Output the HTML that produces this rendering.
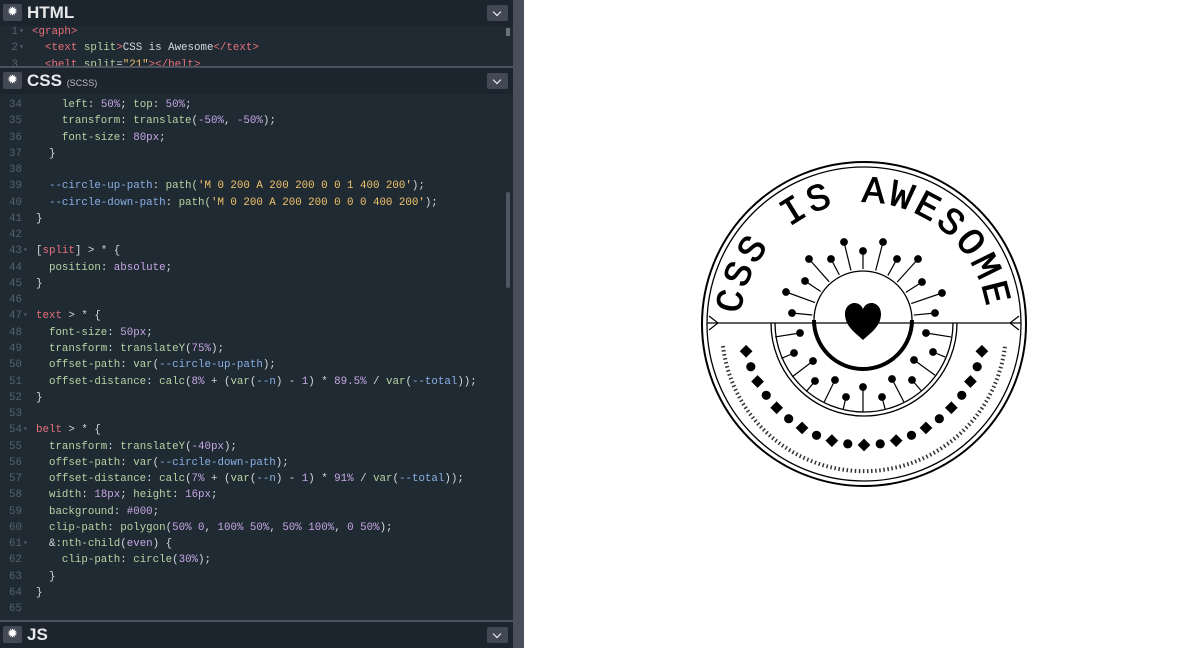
<!DOCTYPE html>
<html><head><meta charset="utf-8"><style>
*{margin:0;padding:0;box-sizing:border-box}
body{width:1200px;height:648px;overflow:hidden;background:#fff;position:relative;font-family:"Liberation Sans",sans-serif}
#ed{position:absolute;left:0;top:0;width:513px;height:648px;background:#1f2a33}
#div{position:absolute;left:513px;top:0;width:11px;height:648px;background:#4a4e5c}
.hd{position:absolute;left:0;width:513px;height:26px;background:#1c252e;color:#e6e8ea;font-weight:bold;font-size:17px}
.hd .g{position:absolute;left:3px;top:4px;width:19px;height:17px;background:#434955;border-radius:2px;color:#fff;font-size:11px;text-align:center;line-height:17px}
.hd .t{position:absolute;left:27px;top:3px}
.hd .t small{font-size:9px;font-weight:normal;color:#bbb}
.hd .b{position:absolute;left:487px;top:5px;width:21px;height:16px;background:#434855;border-radius:2px}
.hd .b:after{content:"";position:absolute;left:7px;top:4px;width:5px;height:5px;border-right:1.6px solid #fff;border-bottom:1.6px solid #fff;transform:rotate(45deg)}
.code{position:absolute;left:0;font-family:"Liberation Mono",monospace;font-size:10.8px;line-height:16.26px;color:#d3d9de;white-space:pre}
.ln{display:inline-block;width:22px;text-align:right;color:#56626c;margin-right:14px;position:relative}
.ln i{position:absolute;left:23px;top:0;font-style:normal;font-size:8px}
.p{color:#b8d4a4}.v{color:#c7a6e3}.s{color:#f3c46a}.r{color:#e8707a}.n{color:#c7a6e3}.u{color:#8ab0e6}
.sep{position:absolute;left:0;width:513px;height:2px;background:#4b545e}
</style></head><body>
<div id="ed">
<div class="hd" style="top:0"><div class="g">✹</div><div class="t">HTML</div><div class="b"></div></div>
<div style="position:absolute;left:0;top:26px;width:513px;height:40px;overflow:hidden;background:#1f2a33">
<div class="code" style="top:-2px;left:-4px"><span class="ln">1<i>▾</i></span><span class="r">&lt;graph&gt;</span>
<span class="ln">2<i>▾</i></span><span class="r">  &lt;text </span><span class="p">split</span><span class="r">&gt;</span>CSS is Awesome<span class="r">&lt;/text&gt;</span>
<span class="ln">3</span><span class="r">  &lt;belt </span><span class="p">split</span>=<span class="s">"21"</span><span class="r">&gt;&lt;/belt&gt;</span></div>
<div style="position:absolute;left:506px;top:2px;width:4px;height:8px;background:#6b737c"></div>
</div>
<div class="sep" style="top:66px"></div>
<div class="hd" style="top:68px"><div class="g">✹</div><div class="t">CSS <small>(SCSS)</small></div><div class="b"></div></div>
<div style="position:absolute;left:506px;top:192px;width:4px;height:96px;background:#4f5862;border-radius:2px"></div>
<div class="code" style="top:97px"><span class="ln">34</span>    <span class="p">left</span>: <span class="n">50%</span>; <span class="p">top</span>: <span class="n">50%</span>;
<span class="ln">35</span>    <span class="p">transform</span>: <span class="p">translate</span>(<span class="n">-50%</span>, <span class="n">-50%</span>);
<span class="ln">36</span>    <span class="p">font-size</span>: <span class="n">80px</span>;
<span class="ln">37</span>  }
<span class="ln">38</span>
<span class="ln">39</span>  <span class="u">--circle-up-path</span>: <span class="p">path(</span><span class="s">'M 0 200 A 200 200 0 0 1 400 200'</span>);
<span class="ln">40</span>  <span class="u">--circle-down-path</span>: <span class="p">path(</span><span class="s">'M 0 200 A 200 200 0 0 0 400 200'</span>);
<span class="ln">41</span>}
<span class="ln">42</span>
<span class="ln">43<i>▾</i></span>[<span class="r">split</span>] &gt; * {
<span class="ln">44</span>  <span class="p">position</span>: <span class="n">absolute</span>;
<span class="ln">45</span>}
<span class="ln">46</span>
<span class="ln">47<i>▾</i></span><span class="r">text</span> &gt; * {
<span class="ln">48</span>  <span class="p">font-size</span>: <span class="n">50px</span>;
<span class="ln">49</span>  <span class="p">transform</span>: <span class="p">translateY</span>(<span class="n">75%</span>);
<span class="ln">50</span>  <span class="p">offset-path</span>: <span class="p">var</span>(<span class="u">--circle-up-path</span>);
<span class="ln">51</span>  <span class="p">offset-distance</span>: <span class="p">calc</span>(<span class="n">8%</span> + (<span class="p">var</span>(<span class="u">--n</span>) - <span class="n">1</span>) * <span class="n">89.5%</span> / <span class="p">var</span>(<span class="u">--total</span>));
<span class="ln">52</span>}
<span class="ln">53</span>
<span class="ln">54<i>▾</i></span><span class="r">belt</span> &gt; * {
<span class="ln">55</span>  <span class="p">transform</span>: <span class="p">translateY</span>(<span class="n">-40px</span>);
<span class="ln">56</span>  <span class="p">offset-path</span>: <span class="p">var</span>(<span class="u">--circle-down-path</span>);
<span class="ln">57</span>  <span class="p">offset-distance</span>: <span class="p">calc</span>(<span class="n">7%</span> + (<span class="p">var</span>(<span class="u">--n</span>) - <span class="n">1</span>) * <span class="n">91%</span> / <span class="p">var</span>(<span class="u">--total</span>));
<span class="ln">58</span>  <span class="p">width</span>: <span class="n">18px</span>; <span class="p">height</span>: <span class="n">16px</span>;
<span class="ln">59</span>  <span class="p">background</span>: <span class="n">#000</span>;
<span class="ln">60</span>  <span class="p">clip-path</span>: <span class="p">polygon</span>(<span class="n">50%</span> <span class="n">0</span>, <span class="n">100%</span> <span class="n">50%</span>, <span class="n">50%</span> <span class="n">100%</span>, <span class="n">0</span> <span class="n">50%</span>);
<span class="ln">61<i>▾</i></span>  &amp;<span class="p">:nth-child</span>(<span class="n">even</span>) {
<span class="ln">62</span>    <span class="p">clip-path</span>: <span class="p">circle</span>(<span class="n">30%</span>);
<span class="ln">63</span>  }
<span class="ln">64</span>}
<span class="ln">65</span></div>
<div class="sep" style="top:620px"></div>
<div class="hd" style="top:622px"><div class="g">✹</div><div class="t">JS</div><div class="b"></div></div>
</div>
<div id="div"></div>
<svg id="badge" width="1200" height="648" style="position:absolute;left:0;top:0" xmlns="http://www.w3.org/2000/svg">
<g fill="none" stroke="#000">
<circle cx="864" cy="324" r="162" stroke-width="2"/>
<circle cx="864" cy="324" r="157" stroke-width="1.3"/>
<line x1="707" y1="323" x2="1021" y2="323" stroke-width="1.3"/>
<path d="M771 323 A93 93 0 0 0 957 323" stroke-width="1.3"/>
<path d="M775 323 A89 89 0 0 0 953 323" stroke-width="1.3"/>
<circle cx="863" cy="320" r="49" stroke-width="1.3"/>
<path d="M814 320 A49 49 0 0 0 912 320" stroke-width="4"/>
<path d="M709 316 L718 323 L709 330 M1019 316 L1010 323 L1019 330" stroke-width="1.2"/>
<path d="M723 346 A142 142 0 0 0 1005 346" stroke-width="4" stroke-dasharray="1.5 2.6" stroke="#333"/>
</g>
<g id="rays" stroke="#000" stroke-width="1.2"></g>
<g id="belt"></g>
<path d="M863 340 C857 334 845 327 845 314 C845 302 859 299 863 309 C867 299 881 302 881 314 C881 327 869 334 863 340Z" fill="#000"/>
<defs><path id="arc" d="M740 326 A124 124 0 0 1 988 326"/></defs>
<text font-family="Liberation Mono,monospace" font-size="38" fill="#000" stroke="#000" stroke-width="0.8"><textPath href="#arc" startOffset="3%" textLength="358" lengthAdjust="spacing">CSS IS AWESOME</textPath></text>
</svg>
<script>
var ns="http://www.w3.org/2000/svg",R=document.getElementById('rays'),B=document.getElementById('belt');
function el(t,a,p){var e=document.createElementNS(ns,t);for(var k in a)e.setAttribute(k,a[k]);p.appendChild(e);}
var up=[[844,242],[883,242],[863,251],[809,259],[831,259],[897,259],[918,259],[805,281],[922,282],[786,292],[942,293],[792,313],[935,313]];
up.forEach(function(d){var dx=d[0]-863,dy=d[1]-320,l=Math.hypot(dx,dy);el('line',{x1:863+dx/l*51,y1:320+dy/l*51,x2:d[0],y2:d[1]},R);el('circle',{cx:d[0],cy:d[1],r:3.3},R);});
var lo=[[800,333],[794,353],[813,361],[815,381],[835,380],[846,397],[863,387],[882,397],[892,379],[912,380],[914,360],[933,352],[926,333]];
lo.forEach(function(d){var dx=d[0]-863,dy=d[1]-323,l=Math.hypot(dx,dy);el('line',{x1:d[0],y1:d[1],x2:863+dx/l*89,y2:323+dy/l*89},R);el('circle',{cx:d[0],cy:d[1],r:3.3},R);});
for(var i=0;i<21;i++){var a=(167-i*(154/20))*Math.PI/180,x=864+121*Math.cos(a),y=324+121*Math.sin(a);
if(i%2==0)el('rect',{x:x-4.5,y:y-4.5,width:9,height:9,transform:'rotate(45 '+x+' '+y+')'},B);else el('circle',{cx:x,cy:y,r:4.6},B);}
</script>
</body></html>
